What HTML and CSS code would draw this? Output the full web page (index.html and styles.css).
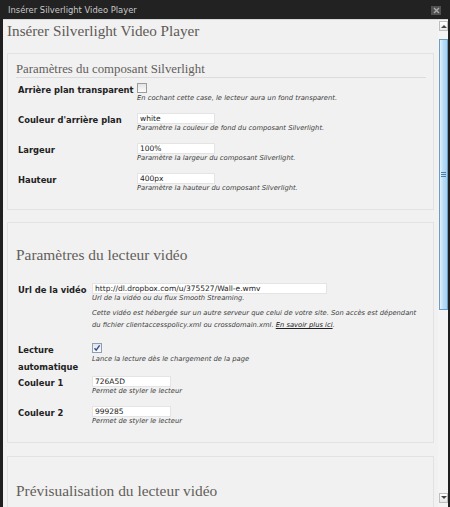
FILE: index.html
```html
<!DOCTYPE html>
<html lang="fr">
<head>
<meta charset="utf-8">
<title>Insérer Silverlight Video Player</title>
<link rel="stylesheet" href="styles.css">
</head>
<body>
<div class="window">
  <div class="titlebar">
    <span class="title">Insérer Silverlight Video Player</span>
    <span class="close"><svg width="7" height="7" viewBox="0 0 7 7"><path d="M1 1L6 6M6 1L1 6" stroke="#aaa" stroke-width="1.4"/></svg></span>
  </div>
  <div class="frame">
    <div class="content">
      <h1 class="page-title">Insérer Silverlight Video Player</h1>

      <section class="box box-first">
        <h2 class="box-title underlined">Paramètres du composant Silverlight</h2>
        <div class="row wide">
          <div class="label">Arrière plan transparent</div>
          <div class="field">
            <span class="checkbox"></span>
            <p class="desc">En cochant cette case, le lecteur aura un fond transparent.</p>
          </div>
        </div>
        <div class="row wide">
          <div class="label">Couleur d'arrière plan</div>
          <div class="field">
            <input class="text short" value="white">
            <p class="desc">Paramètre la couleur de fond du composant Silverlight.</p>
          </div>
        </div>
        <div class="row wide">
          <div class="label">Largeur</div>
          <div class="field">
            <input class="text short" value="100%">
            <p class="desc">Paramètre la largeur du composant Silverlight.</p>
          </div>
        </div>
        <div class="row wide last">
          <div class="label">Hauteur</div>
          <div class="field">
            <input class="text short" value="400px">
            <p class="desc">Paramètre la hauteur du composant Silverlight.</p>
          </div>
        </div>
      </section>

      <section class="box box-second">
        <h2 class="box-title large">Paramètres du lecteur vidéo</h2>
        <div class="row narrow url-row">
          <div class="label">Url de la vidéo</div>
          <div class="field">
            <input class="text long" value="http://dl.dropbox.com/u/375527/Wall-e.wmv">
            <p class="desc">Url de la vidéo ou du flux Smooth Streaming.</p>
            <p class="desc note">Cette vidéo est hébergée sur un autre serveur que celui de votre site. Son accès est dépendant<br>du fichier clientaccesspolicy.xml ou crossdomain.xml. <a class="more" href="#">En savoir plus ici</a>.</p>
          </div>
        </div>
        <div class="row narrow tight">
          <div class="label">Lecture automatique</div>
          <div class="field">
            <span class="checkbox checked"><svg width="8" height="8" viewBox="0 0 8 8"><path d="M1.5 4.2L3.2 6.2L6.6 1.4" fill="none" stroke="#2b4e9c" stroke-width="1.4"/></svg></span>
            <p class="desc">Lance la lecture dès le chargement de la page</p>
          </div>
        </div>
        <div class="row narrow">
          <div class="label">Couleur 1</div>
          <div class="field">
            <input class="text color" value="726A5D">
            <p class="desc">Permet de styler le lecteur</p>
          </div>
        </div>
        <div class="row narrow last">
          <div class="label">Couleur 2</div>
          <div class="field">
            <input class="text color" value="999285">
            <p class="desc">Permet de styler le lecteur</p>
          </div>
        </div>
      </section>

      <section class="box box-third">
        <h2 class="box-title large">Prévisualisation du lecteur vidéo</h2>
      </section>
    </div>
    <div class="scrollbar">
      <div class="sb-btn up"><svg width="6" height="4" viewBox="0 0 6 4"><path d="M0 4L3 1L6 4Z" fill="#444"/></svg></div>
      <div class="sb-gap"></div>
      <div class="sb-thumb"><span class="grip"></span></div>
      <div class="sb-track"></div>
      <div class="sb-btn down"><svg width="6" height="4" viewBox="0 0 6 4"><path d="M0 0L3 3L6 0Z" fill="#444"/></svg></div>
    </div>
  </div>
</div>
</body>
</html>
```
FILE: styles.css
```css
* { box-sizing: border-box; }
html, body { margin: 0; padding: 0; }
body {
  width: 450px;
  height: 507px;
  overflow: hidden;
  background: #1f1f1f;
  font-family: "DejaVu Sans", Verdana, sans-serif;
}
.window {
  height: 507px;
  display: flex;
  flex-direction: column;
  background: #1f1f1f;
}
.titlebar {
  height: 19px;
  flex: none;
  display: flex;
  align-items: center;
  justify-content: space-between;
  padding: 0 9px 0 8px;
  background: #222;
  color: #c9c9c9;
  font-size: 8.4px;
}
.close {
  width: 10px;
  height: 9px;
  background: #505050;
  display: flex;
  align-items: center;
  justify-content: center;
  margin-top: 1px;
}
.frame {
  flex: 1;
  min-height: 0;
  display: flex;
  margin: 0 2px 0 3px;
  border-top: 1px solid #d8d8d8;
}
.content {
  flex: 1;
  background: #f1f1f1;
  padding: 0 4px;
  overflow: hidden;
}
.page-title {
  margin: 2px 0 13px;
  font-family: "Liberation Serif", "Times New Roman", serif;
  font-weight: normal;
  font-size: 15.2px;
  line-height: 18px;
  color: #5e5a56;
}
.box {
  border: 1px solid #e2e2e2;
  background: #f1f1f1;
  margin-bottom: 12px;
  padding: 0 7px 16px 10px;
}
.box-second { margin-bottom: 13px; }
.box-title {
  font-family: "Liberation Serif", "Times New Roman", serif;
  font-weight: normal;
  color: #625e5a;
  margin: 0;
}
.underlined {
  font-size: 12.8px;
  line-height: 16px;
  margin: 7px 0 5px -2px;
  border-bottom: 1px solid #dcdcdc;
}
.large {
  font-size: 15.4px;
  line-height: 19px;
  margin: 22px 0 19px -2px;
}
.box-third .large { margin-top: 24px; }
.row {
  display: flex;
  align-items: flex-start;
  margin-bottom: 10px;
}
.row.last { margin-bottom: 0; }
.row.tight { margin-bottom: 0; }
.url-row { margin-bottom: 12px; }
.label {
  flex: none;
  font-weight: bold;
  font-size: 8.4px;
  line-height: 17px;
  color: #222;
  margin-top: -1px;
}
.wide .label { width: 119px; }
.narrow .label { width: 74px; }
.field { flex: 1; }
.desc {
  margin: 0;
  font-style: italic;
  font-size: 6.75px;
  line-height: 9px;
  color: #3c3c3c;
}
.wide .checkbox + .desc { margin-top: 1px; }
.note {
  margin-top: 4px;
  line-height: 12px;
}
.more {
  color: #222;
  text-decoration: underline;
}
.text {
  display: block;
  height: 11px;
  margin: 0;
  padding: 0 2px;
  border: 1px solid #e4e4e4;
  background: #fff;
  font-family: "DejaVu Sans", Verdana, sans-serif;
  font-size: 7.5px;
  color: #222;
  outline: none;
}
.short { width: 78px; }
.long { width: 235px; }
.color { width: 79px; }
.checkbox {
  display: flex;
  align-items: center;
  justify-content: center;
  width: 10px;
  height: 10px;
  border: 1px solid #9c9c9c;
  background: linear-gradient(#e4e4e4, #fbfbfb);
  margin-bottom: 0;
}
.checkbox.checked {
  margin-bottom: 2px;
  border-color: #8f9db5;
}
.scrollbar {
  flex: none;
  width: 10px;
  background: #f4f4f4;
  display: flex;
  flex-direction: column;
  padding: 1px 0 4px 1px;
}
.sb-btn {
  height: 10px;
  flex: none;
  border: 1px solid #bdbdbd;
  background: linear-gradient(#ffffff, #e6e6e6);
  display: flex;
  align-items: center;
  justify-content: center;
}
.sb-gap { height: 8px; flex: none; }
.sb-thumb {
  height: 271px;
  flex: none;
  border: 1px solid #6d9cc2;
  background: linear-gradient(to right, #e4f3fc, #b9def6 45%, #a3d2f1);
  display: flex;
  align-items: center;
  justify-content: center;
}
.grip {
  width: 5px;
  height: 5px;
  border-top: 1px solid #4d7fae;
  border-bottom: 1px solid #4d7fae;
  background: linear-gradient(#4d7fae, #4d7fae) center / 100% 1px no-repeat;
}
.sb-track { flex: 1; }
```
